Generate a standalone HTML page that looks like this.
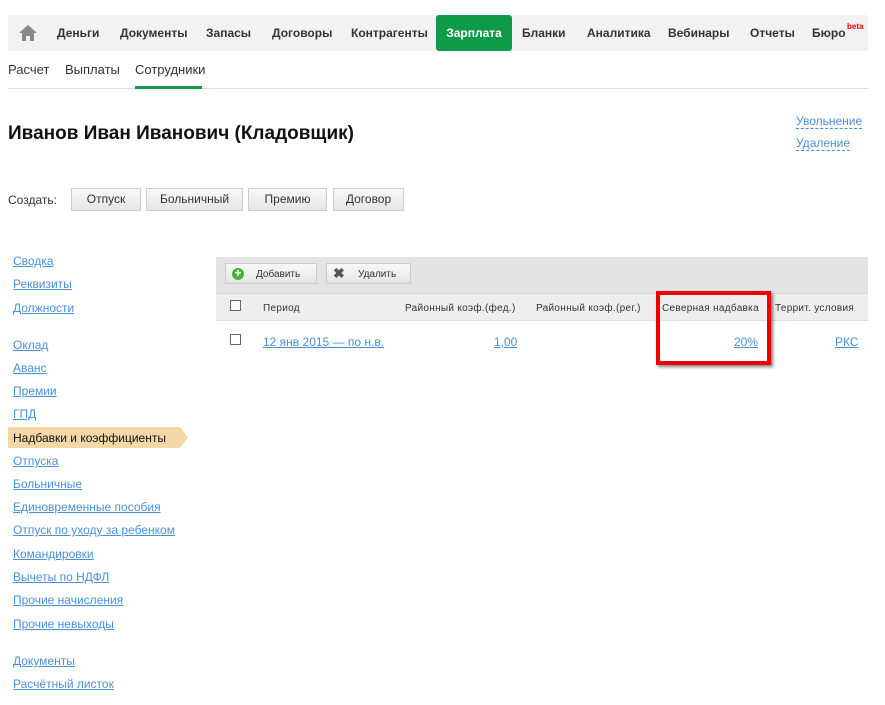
<!DOCTYPE html>
<html><head><meta charset="utf-8"><style>
*{margin:0;padding:0;box-sizing:border-box}
body{width:885px;height:705px;background:#fff;font-family:"Liberation Sans","Noto Sans CJK JP",sans-serif;position:relative;overflow:hidden;color:#222}
.a{position:absolute;white-space:nowrap}
.nav{left:8px;top:15px;width:860px;height:36px;background:#f2f2f2;border-radius:3px}
.ni{top:26px;font-size:12px;font-weight:bold;color:#333}
.green{left:436px;top:15px;width:76px;height:36px;background:#0e9a48;border-radius:3px;color:#fff;font-size:12px;font-weight:bold;text-align:center;line-height:37px}
.sub{top:62px;font-size:13px;color:#333}
.lnk{color:#4a90d6;text-decoration:underline;font-size:12px}
.dash{color:#4a90d6;font-size:12px;border-bottom:1px dashed #4a90d6;line-height:14px}
.btn{top:188px;height:23px;background:linear-gradient(#f8f8f8,#e6e6e6);border:1px solid #ccc;font-size:12px;text-align:center;line-height:21px;color:#333}
.side{left:13px;font-size:12px}
.th{top:302px;font-size:10px;color:#333;letter-spacing:.3px}
.cb{width:11px;height:11px;border:1px solid #666;background:#fff}
</style></head><body>
<div class="a nav"></div>
<svg class="a" style="left:18px;top:24px" width="20" height="18" viewBox="0 0 20 18"><path d="M10 1 L1 9 H4 V17 H8 V12 H12 V17 H16 V9 H19 Z" fill="#888"/></svg>
<div class="a ni" style="left:57px">Деньги</div>
<div class="a ni" style="left:120px">Документы</div>
<div class="a ni" style="left:206px">Запасы</div>
<div class="a ni" style="left:272px">Договоры</div>
<div class="a ni" style="left:351px">Контрагенты</div>
<div class="a green">Зарплата</div>
<div class="a ni" style="left:522px">Бланки</div>
<div class="a ni" style="left:587px">Аналитика</div>
<div class="a ni" style="left:668px">Вебинары</div>
<div class="a ni" style="left:750px">Отчеты</div>
<div class="a ni" style="left:812px">Бюро</div>
<div class="a" style="left:847px;top:22px;font-size:8px;color:#f00;font-weight:bold">beta</div>
<div class="a sub" style="left:8px">Расчет</div>
<div class="a sub" style="left:65px">Выплаты</div>
<div class="a sub" style="left:135px">Сотрудники</div>
<div class="a" style="left:8px;top:88px;width:860px;height:1px;background:#ddd"></div>
<div class="a" style="left:135px;top:86px;width:67px;height:3px;background:#0e9a48"></div>
<div class="a" style="left:8px;top:123px;font-size:19px;font-weight:bold;color:#111">Иванов Иван Иванович (Кладовщик)</div>
<div class="a dash" style="left:796px;top:114px">Увольнение</div>
<div class="a dash" style="left:796px;top:136px">Удаление</div>
<div class="a" style="left:8px;top:193px;font-size:12px;color:#333">Создать:</div>
<div class="a btn" style="left:71px;width:70px">Отпуск</div>
<div class="a btn" style="left:146px;width:97px">Больничный</div>
<div class="a btn" style="left:248px;width:79px">Премию</div>
<div class="a btn" style="left:333px;width:71px">Договор</div>
<div class="a side lnk" style="top:254px">Сводка</div>
<div class="a side lnk" style="top:277px">Реквизиты</div>
<div class="a side lnk" style="top:301px">Должности</div>
<div class="a side lnk" style="top:338px">Оклад</div>
<div class="a side lnk" style="top:361px">Аванс</div>
<div class="a side lnk" style="top:384px">Премии</div>
<div class="a side lnk" style="top:407px">ГПД</div>
<div class="a" style="left:8px;top:427px;width:180px;height:21px;background:#f3d7a6;clip-path:polygon(0 0,172px 0,180px 50%,172px 100%,0 100%)"></div>
<div class="a side" style="top:431px;color:#111">Надбавки и коэффициенты</div>
<div class="a side lnk" style="top:454px">Отпуска</div>
<div class="a side lnk" style="top:477px">Больничные</div>
<div class="a side lnk" style="top:500px">Единовременные пособия</div>
<div class="a side lnk" style="top:523px">Отпуск по уходу за ребенком</div>
<div class="a side lnk" style="top:547px">Командировки</div>
<div class="a side lnk" style="top:570px">Вычеты по НДФЛ</div>
<div class="a side lnk" style="top:593px">Прочие начисления</div>
<div class="a side lnk" style="top:617px">Прочие невыходы</div>
<div class="a side lnk" style="top:654px">Документы</div>
<div class="a side lnk" style="top:677px">Расчётный листок</div>
<div class="a" style="left:216px;top:257px;width:652px;height:36px;background:#e4e4e4"></div>
<div class="a" style="left:216px;top:293px;width:652px;height:28px;background:#eee;border-top:1px solid #d8d8d8;border-bottom:1px solid #ddd"></div>
<div class="a btn" style="left:225px;top:263px;width:92px;height:21px;font-size:10px;line-height:21px;text-align:left;padding-left:30px">Добавить</div>
<div class="a" style="left:232px;top:268px;width:12px;height:12px;border-radius:50%;background:#4bb03a;color:#fff;font-size:12px;line-height:11px;text-align:center;font-weight:bold">+</div>
<div class="a btn" style="left:326px;top:263px;width:85px;height:21px;font-size:10px;line-height:21px;text-align:left;padding-left:31px">Удалить</div>
<div class="a" style="left:333px;top:265px;font-size:14px;color:#555;font-weight:bold">✖</div>
<div class="a cb" style="left:230px;top:300px"></div>
<div class="a th" style="left:263px;top:303px">Период</div>
<div class="a th" style="left:405px;top:303px">Районный коэф.(фед.)</div>
<div class="a th" style="left:536px;top:303px">Районный коэф.(рег.)</div>
<div class="a th" style="left:662px;top:303px">Северная надбавка</div>
<div class="a th" style="left:775px;top:303px">Террит. условия</div>
<div class="a cb" style="left:230px;top:334px"></div>
<div class="a lnk" style="left:263px;top:335px">12 янв 2015 — по н.в.</div>
<div class="a lnk" style="left:494px;top:335px">1,00</div>
<div class="a lnk" style="left:734px;top:335px">20%</div>
<div class="a lnk" style="left:835px;top:335px">РКС</div>
<div class="a" style="left:656px;top:291px;width:115px;height:74px;border:4px solid #e00;box-shadow:2px 2px 3px rgba(0,0,0,.5)"></div>
</body></html>
